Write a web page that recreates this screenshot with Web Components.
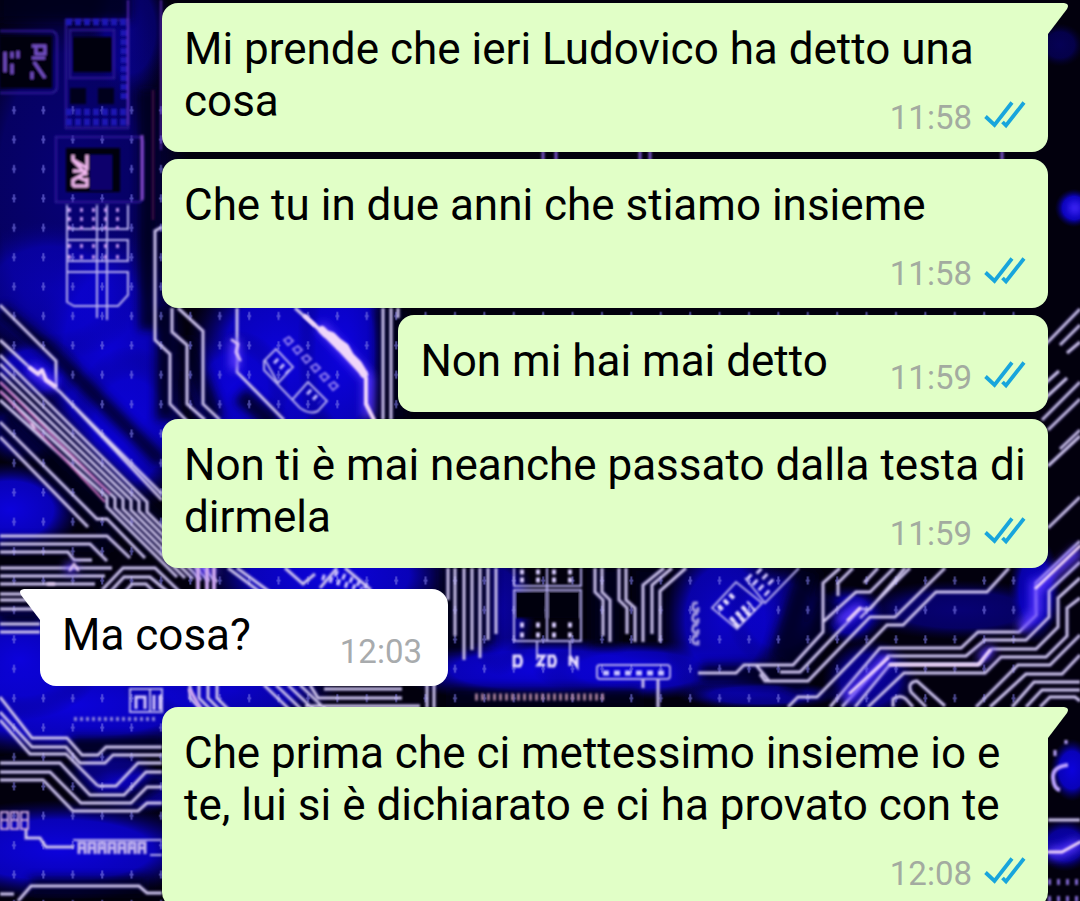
<!DOCTYPE html>
<html lang="it">
<head>
<meta charset="utf-8">
<meta name="viewport" content="width=device-width, initial-scale=1">
<title>Chat</title>
<style>
    body {
        margin: 0;
        background: #000;
        font-family: Roboto, "Liberation Sans", sans-serif;
        overflow: hidden;
    }
</style>
</head>
<body>
<chat-screen>
    <chat-bubble side="out" tail time="11:58">Mi prende che ieri Ludovico ha detto una cosa</chat-bubble>
    <chat-bubble side="out" time="11:58">Che tu in due anni che stiamo insieme</chat-bubble>
    <chat-bubble side="out" time="11:59">Non mi hai mai detto</chat-bubble>
    <chat-bubble side="out" time="11:59">Non ti è mai neanche passato dalla testa di dirmela</chat-bubble>
    <chat-bubble side="in" tail time="12:03">Ma cosa?</chat-bubble>
    <chat-bubble side="out" tail time="12:08">Che prima che ci mettessimo insieme io e te, lui si è dichiarato e ci ha provato con te</chat-bubble>
</chat-screen>

<script>
// Trace helpers for the wallpaper
const repeat = (n, fn) => Array.from({ length: n }, (_, k) => fn(k)).join('');

// Blue light pools: cx, cy, rx, ry, opacity
const pools = [
    [70, 190, 100, 190, 0.5], [110, 360, 65, 120, 0.95], [130, 430, 50, 70, 0.9], [50, 290, 80, 60, 0.6], [10, 510, 60, 40, 1],
    [35, 370, 40, 28, 0.9], [25, 430, 40, 30, 0.6], [70, 705, 150, 45, 1], [20, 660, 70, 50, 1], [60, 850, 130, 42, 1],
    [130, 30, 35, 60, 0.5], [140, 790, 50, 20, 0.7], [110, 775, 40, 25, 0.6],
    [280, 360, 80, 90, 1], [345, 350, 40, 100, 1], [235, 390, 45, 50, 0.9],
    [330, 575, 110, 50, 1], [230, 690, 90, 30, 0.9], [545, 670, 130, 28, 1], [500, 610, 30, 55, 0.7],
    [640, 670, 90, 25, 0.9], [725, 620, 55, 75, 0.9], [780, 615, 45, 45, 0.7], [760, 695, 70, 12, 0.7],
    [960, 610, 90, 25, 0.5], [850, 615, 30, 25, 0.8], [1035, 590, 22, 45, 0.9], [870, 680, 40, 35, 0.7],
    [1074, 208, 16, 16, 1], [1060, 45, 20, 18, 0.35], [1072, 770, 18, 26, 1], [1065, 845, 25, 22, 0.8]
];

const traces = [
    // left diagonal bus
    'M0 305L56 361V388L162 494', 'M0 340L28 366L60 392L162 500',
    repeat(6, k => `M0 ${355 + k * 9}L${147 - k * 8} ${502 - k}v10l70 70`),
    'M0 422L97 519h10L145 558', 'M0 437L88 527',
    'M0 536H107L130 558', 'M0 544H90L107 561', 'M0 552H68L74 560H92',
    'M0 568H112', 'M0 576H105', 'M0 584H95', 'M0 594H40', 'M0 600H40', 'M0 609H40', 'M0 624H40', 'M0 632H40',
    'M102 590L123 568H155L180 592', 'M110 592L124 577H150L168 592', 'M125 592L132 584H146L154 592',
    'M155 330V231L162 227', 'M155 230V340L170 354V404L190 424',
    // between the second and fourth message
    'M172 308V332L187 345V404L205 420', 'M178 308L203 331V404L220 420',
    'M237 308V372L284 420', 'M295 308L315 326', 'M383 308V420', 'M391 308V420', 'M398 308V318',
    // lower left bus
    'M0 697L32 738H67L82 755H98L106 747H162', 'M0 712L32 747H66L80 763H105L113 755H162',
    'M0 720L30 754H66L98 786', 'M0 763H60L90 795H124L146 772H162', 'M0 772H50L81 803H131L147 787H162',
    'M0 780H43L73 811H138L147 803H162', 'M98 786H116L138 763H162',
    'M26 830V838H40L46 847H74', 'M18 901L31 886H139L147 893H162', 'M0 894H14',
    // around the incoming message
    'M228 568L260 592', 'M237 568L270 592', 'M285 568L303 584L315 574', 'M320 588L337 568', 'M345 568L371 590',
    repeat(4, k => `M${190 + k * 9} 684V698L${202 + k * 9} 710`),
    repeat(4, k => `M${264 + k * 12} 685L${290 + k * 12} 710`),
    'M310 685L318 698H402', 'M324 689H402', 'M305 706H420', 'M427 684V708', 'M434 684V708', 'M448 568V600',
    // central vertical bus
    'M455 568V636', 'M464 568V660', 'M472 568V650', 'M480 568V658', 'M488 568V640', 'M496 568V634',
    'M595 568V592L603 600V636', 'M602 568V592L610 600V642', 'M619 568V600L627 608V634', 'M626 568V600L635 608V642',
    'M664 568L643 585V642', 'M672 568L652 585V634', 'M686 568L660 591V642', 'M643 680V688', 'M658 680V708',
    // lower right bus
    'M840 568L823 583V632L793 665H760', 'M853 568L838 583V596', 'M878 568L864 583',
    'M894 568L870 592H856L823 622', 'M905 568L870 609H860L800 672H780', 'M945 568L895 617H870L808 681H765L760 674',
    'M1009 568L987 592H936L903 625H887L817 697H798L788 707', 'M910 568L860 618',
    'M698 673H736L744 665H756L770 682', 'M745 665H760',
    'M830 707L880 648H961L978 632H1019L1036 615V583L1080 541',
    'M842 707L888 656H966L985 640H1026L1049 617V591L1080 562',
    'M855 707L890 664H980L992 649H1036L1058 627V598L1080 578',
    'M868 707L904 673H985L1001 657H1046L1067 636V608L1080 598',
    'M976 707L1018 665H1050L1080 635', 'M990 707L1026 674H1062L1080 655',
    'M1012 707L1034 682H1080', 'M1026 707L1042 690H1080', 'M1040 707L1050 697H1075L1080 701',
    'M926 707L911 692Q907 682 917 681L945 706', 'M893 707V699Q900 694 906 699L913 707',
    'M1040 350L1080 309', 'M1060 345L1080 325', 'M1067 353L1080 342', 'M1040 403L1067 378', 'M1040 388L1059 371',
    'M1042 420L1080 382', 'M1048 430L1080 399', 'M1060 449L1080 430', 'M1048 466L1080 436', 'M1048 528L1080 497',
    'M1048 820H1080'
];

// Faint component outlines
const outlines = [
    'M0 31H50Q57 31 57 38V86Q57 93 50 93H0', 'M66 20H128V128H66Z', 'M70 30H114V78H70Z',
    'M56 137H138Q143 137 143 142V196Q143 202 138 202H56Z'
];

const chips = [
    'M67 205V302L74 306H118L128 295V272H67', 'M67 229H128V205', 'M67 261H128V240H67', 'M97 205V318', 'M107 205V320',
    'M265 360L276 349L293 367L278 383Z', 'M264 360V370L300 408Q310 415 318 411L327 401L308 382L292 400',
    'M514 568V586H581V568', 'M514 590H581V641H514Z', 'M547 568V641', 'M537 641V660', 'M570 641V660',
    'M597 668Q597 665 600 665H667Q670 665 670 668V676Q670 679 667 679H600Q597 679 597 676Z',
    'M712 608L736 582L762 603L737 629Z', 'M745 578L765 603L799 568', 'M130 689H162V712H130Z', 'M150 689V712',
    'M73 840H162', 'M150 855H162'
];

const circuitTemplate = document.createElement('template');
circuitTemplate.innerHTML = `
    <style>
        :host {
            display: block;
            position: absolute;
            inset: 0;
            overflow: hidden;
            background: #02000d;
        }

        svg { display: block; width: 100%; height: 100%; }
        path { fill: none; }
    </style>
    <svg viewBox="0 0 1080 901" preserveAspectRatio="xMidYMid slice" aria-hidden="true">
        <defs>
            <radialGradient id="pool">
                <stop offset="0" stop-color="#0c02dc"/>
                <stop offset=".6" stop-color="#0a02cc" stop-opacity=".9"/>
                <stop offset="1" stop-color="#06026a" stop-opacity="0"/>
            </radialGradient>
            <pattern id="dots" width="29.4" height="29.4" y="2" patternUnits="userSpaceOnUse">
                <path d="M14 16v8M12 20h4" stroke="#7c78e8" stroke-width="2" opacity=".6"/>
            </pattern>
            <filter id="soft" x="-5%" y="-5%" width="110%" height="110%"><feGaussianBlur stdDeviation=".8"/></filter>
            <filter id="glow" x="-10%" y="-10%" width="120%" height="120%"><feGaussianBlur stdDeviation="5"/></filter>
        </defs>
        <g>${pools.map(([x, y, rx, ry, o]) => `<ellipse cx="${x}" cy="${y}" rx="${rx * 1.2}" ry="${ry * 1.2}" fill="url(#pool)" opacity="${o}"/>`).join('')}</g>

        <!-- dark beds below the traces -->
        <g filter="url(#glow)" stroke="#04001c" stroke-width="14" opacity=".85">
            <path d="M0 310L55 355L162 462M0 425L115 540M0 545H110M0 575H100M0 620H40M0 766H60L90 800H130L162 780"/>
            <path d="M0 385L162 540" stroke-width="40"/>
            <path d="M148 90V330" stroke-width="18"/>
            <path d="M165 308V420M185 340L215 420M240 395L275 425M386 308V420M398 308V420" stroke-width="18"/>
            <path d="M455 568V650M480 568V645M605 568V645M650 568V640" stroke-width="28"/>
            <path d="M450 698H640M700 673H790" stroke-width="18"/>
            <path d="M810 568L780 660M830 600L790 690" stroke-width="24"/>
            <path d="M70 745H162M30 886H145" stroke-width="16"/>
            <path d="M0 5H130" stroke-width="30"/>
        </g>
        <rect y="90" width="1030" height="811" fill="url(#dots)"/>

        <g filter="url(#soft)">
            <path d="${outlines.join('')}" stroke="#2e1a98" stroke-width="3" opacity=".7"/>
            <path d="M0 36H52V88H0ZM73 37H112V72H73ZM66 148H120V192H66Z" style="fill:#01000a"/>
            <path d="M90 155H112V190H90Z" style="fill:#08046c"/>
            <path d="M66 22H128M124 30V100M66 112H128M66 122H128" stroke="#1d12b4" stroke-width="7" stroke-dasharray="6 3"/>
            <path d="M70 88H86V104H70ZM98 88H114V104H98Z" style="fill:#02001c"/>
            <path d="M128 0V125M161 0V150" stroke="#6a35c8" stroke-width="2" opacity=".7"/>
            <path d="M142 135V200" stroke="#8246c8" stroke-width="3"/>
            <path d="M153 90V220" stroke="#51104f" stroke-width="3" opacity=".6"/>

            <!-- vertical markings on the chips -->
            <path d="M5 52V72M12 52V58M12 64V74M18 51V58M32 46H45V54H36V46M32 58H45M34 62L45 78M32 72V79" stroke="#7450c8" stroke-width="3"/>
            <path d="M73 155V160L87 168M73 160L87 175M87 155V170M73 171H87M73 186V180L87 172M87 186H73M87 178V187M78 177L87 181" stroke="#f0b6ee" stroke-width="3"/>

            <path d="M516 592H545V618H516ZM549 592H579V618H549Z" style="fill:#01000a"/>
            <path d="${traces.join('')}" stroke="#6544c8" stroke-width="5" opacity=".35"/>
            <path d="${traces.join('')}" stroke="#d6cdf2" stroke-width="2.4"/>
            <path d="${chips.join('')}" stroke="#b4abee" stroke-width="2"/>
            <path d="M0 382L110 494M0 391L105 502" stroke="#c06bb8" stroke-width="2"/>

            <!-- pads -->
            <path d="M68 210H126M68 219H126M68 228H126M68 246H126M68 257H126" stroke="#bd91ee" stroke-width="4" stroke-dasharray="3 9"/>
            <path d="M520 572H578M520 580H578M520 625H578M520 635H578" stroke="#d9ccff" stroke-width="5" stroke-dasharray="4 12"/>
            <path d="M603 673H666" stroke="#cbc5ff" stroke-width="5" stroke-dasharray="6 5"/>
            <path d="M475 697H607" stroke="#a27c98" stroke-width="7" stroke-dasharray="3 3"/>
            <path d="M74 719H158" stroke="#8d84dc" stroke-width="4" stroke-dasharray="3 3"/>
            <path d="M136 709V697H145V709M154 695V710M160 695V710" stroke="#d5c7ff" stroke-width="3"/>
            <path d="${repeat(7, k => `M${79 + k * 10} 854V843h6V854M${79 + k * 10} 848h6`)}" stroke="#c6b7ee" stroke-width="3"/>
            <path d="${repeat(3, k => `M${1 + k * 10} 812h7V829h-7ZM${1 + k * 10} 820h7`)}" stroke="#c49fd8" stroke-width="2"/>
            <path d="M514 656h6q3 5 0 10h-6ZM537 656h7l-6 9h7M549 656h5q3 5 0 10h-5ZM570 656l7 10V656M570 656V666" stroke="#e7ddff" stroke-width="3"/>
            <path d="${repeat(4, k => `M698 ${603 + k * 11}h-4q-4 8 4 8v-4`)}" stroke="#a096e0" stroke-width="3"/>
            <path d="M719 609L735 593M731 621L750 603M735 626L754 608" stroke="#e5dcff" stroke-width="6" stroke-dasharray="4 4"/>
            <path d="M748 576L768 594M758 570L775 586" stroke="#d2c6ff" stroke-width="7" stroke-dasharray="3 5"/>
            <path d="${repeat(6, k => `M${284 + k * 9} ${340 + k * 9}l5 -3l4 4l-5 4Z`)}" stroke="#8f7df0" stroke-width="2"/>
            <path d="M275 360L288 372M308 391L320 402" stroke="#c3b8ff" stroke-width="6" stroke-dasharray="3 5"/>
            <path d="M322 577L362 590M335 573L370 588" stroke="#cfc4ff" stroke-width="6" stroke-dasharray="3 5"/>
            <path d="M1055 750V756M1066 740V744" stroke="#bca6ff" stroke-width="3"/>
            <path d="M1068 765Q1052 767 1053 778T1060 790" stroke="#b9a0ff" stroke-width="4"/>
            <path d="M1048 882H1080M1048 899H1080" stroke="#8068d0" stroke-width="6" stroke-dasharray="3 6"/>
        </g>

        <!-- lit traces -->
        <g filter="url(#glow)" stroke="#5a38ff" stroke-width="10">
            <path d="M838 622L862 606M845 700L888 657M980 660L992 648M1036 590L1080 550M1036 580V612L1020 630M1070 208h10M196 570H216"/>
            <path d="M30 368L55 386M320 325L368 378V418M235 340V370M66 568H76M1048 852H1062L1080 843"/>
        </g>
        <g filter="url(#soft)" stroke="#f0d6fa" stroke-linecap="round" stroke-linejoin="round">
            <path d="M860 608L848 620M850 693L888 658M890 665H978L990 650M1036 588L1080 546M1048 852H1062L1080 842" stroke-width="3"/>
            <path d="M30 368L38 374L42 370L46 380L55 386M305 316L320 330L340 350L366 378V404L374 420" stroke-width="4"/>
            <path d="M322 330L326 334L332 336L338 342L345 347L350 356L358 364L364 374" stroke-width="8"/>
            <path d="M232 340L238 344L236 352L240 360M32 424L34 428M70 570L74 564L78 570M48 584H54" stroke-width="3" opacity=".8"/>
            <path d="M198 568V590M207 568V590M214 568V590M190 690L200 708" stroke="#c9a4ee" stroke-width="4"/>
            <path d="M543 152V160M556 152V160M640 152V160M650 152V160M1002 152V160" stroke="#7752c4" stroke-width="3"/>
        </g>
    </svg>
`;

class CircuitWallpaper extends HTMLElement {
    constructor() {
        super();
        this.attachShadow({ mode: 'open' });
        this.shadowRoot.appendChild(circuitTemplate.content.cloneNode(true));
    }
}

customElements.define('circuit-wallpaper', CircuitWallpaper);

const ticksTemplate = document.createElement('template');
ticksTemplate.innerHTML = `
    <style>
        :host { display: block; width: 42px; height: 28px; }
        svg { display: block; }
    </style>
    <svg width="42" height="28" viewBox="0 0 42 28" fill="none" stroke="#18a5dc" stroke-width="3.8" role="img" aria-label="Letto">
        <path d="M1.5 15.5L10.5 24L28 1.5M18.5 21L22 24.5L40 1.5"/>
    </svg>
`;

class ReadTicks extends HTMLElement {
    constructor() {
        super();
        this.attachShadow({ mode: 'open' });
        this.shadowRoot.appendChild(ticksTemplate.content.cloneNode(true));
    }
}

customElements.define('read-ticks', ReadTicks);

const bubbleTemplate = document.createElement('template');
bubbleTemplate.innerHTML = `
    <style>
        :host {
            --fill: #e1ffc7;
            display: flow-root;
            position: relative;
            box-sizing: border-box;
            max-width: calc(100% - 122px);
            padding: 20px 22px 13px;
            border-radius: 16px;
            background: var(--fill);
            color: #000;
            font-size: 44px;
            line-height: 52px;
        }

        :host([side="out"]) { align-self: flex-end; }
        :host([side="in"]) { --fill: #fff; align-self: flex-start; }
        :host([side="out"][tail]) { border-top-right-radius: 0; }
        :host([side="in"][tail]) { border-top-left-radius: 0; }

        /* The first message of a group stands further from the one above */
        :host([tail]:not(:first-child)) { margin-top: 14px; }

        /* Floats onto the last line when there is room, below it when not */
        .meta {
            float: right;
            display: flex;
            align-items: flex-end;
            gap: 12px;
            height: 64px;
            margin-left: 62px;
            color: #a3aba0;
            font-size: 33px;
            line-height: 42px;
        }

        :host([side="in"]) .meta { margin-left: 89px; padding-right: 4px; color: #a8abad; }
        :host([side="in"]) read-ticks { display: none; }
        read-ticks { margin-bottom: 10px; }

        .tail { display: none; position: absolute; top: 0; left: 100%; fill: var(--fill); }
        :host([tail]) .tail { display: block; }
        :host([side="in"]) .tail { left: auto; right: 100%; transform: scaleX(-1); }
    </style>
    <svg class="tail" width="20" height="32" viewBox="0 0 20 32" aria-hidden="true">
        <path d="M-1 0H16Q22 1 19 6L0 31H-1Z"/>
    </svg>
    <slot></slot>
    <div class="meta"><time></time><read-ticks></read-ticks></div>
`;

class ChatBubble extends HTMLElement {
    static get observedAttributes() {
        return ['time'];
    }

    constructor() {
        super();
        this.attachShadow({ mode: 'open' });
        this.shadowRoot.appendChild(bubbleTemplate.content.cloneNode(true));
    }

    attributeChangedCallback(name, oldValue, newValue) {
        this.shadowRoot.querySelector('time').textContent = newValue;
    }
}

customElements.define('chat-bubble', ChatBubble);

const screenTemplate = document.createElement('template');
screenTemplate.innerHTML = `
    <style>
        :host {
            display: block;
            position: relative;
            height: 100vh;
            overflow: hidden;
        }

        .messages {
            display: flex;
            flex-direction: column;
            gap: 7px;
            position: relative;
            padding: 3px 32px 8px 40px;
        }
    </style>
    <circuit-wallpaper></circuit-wallpaper>
    <main class="messages"><slot></slot></main>
`;

class ChatScreen extends HTMLElement {
    constructor() {
        super();
        this.attachShadow({ mode: 'open' });
        this.shadowRoot.appendChild(screenTemplate.content.cloneNode(true));
    }
}

customElements.define('chat-screen', ChatScreen);
</script>
</body>
</html>
